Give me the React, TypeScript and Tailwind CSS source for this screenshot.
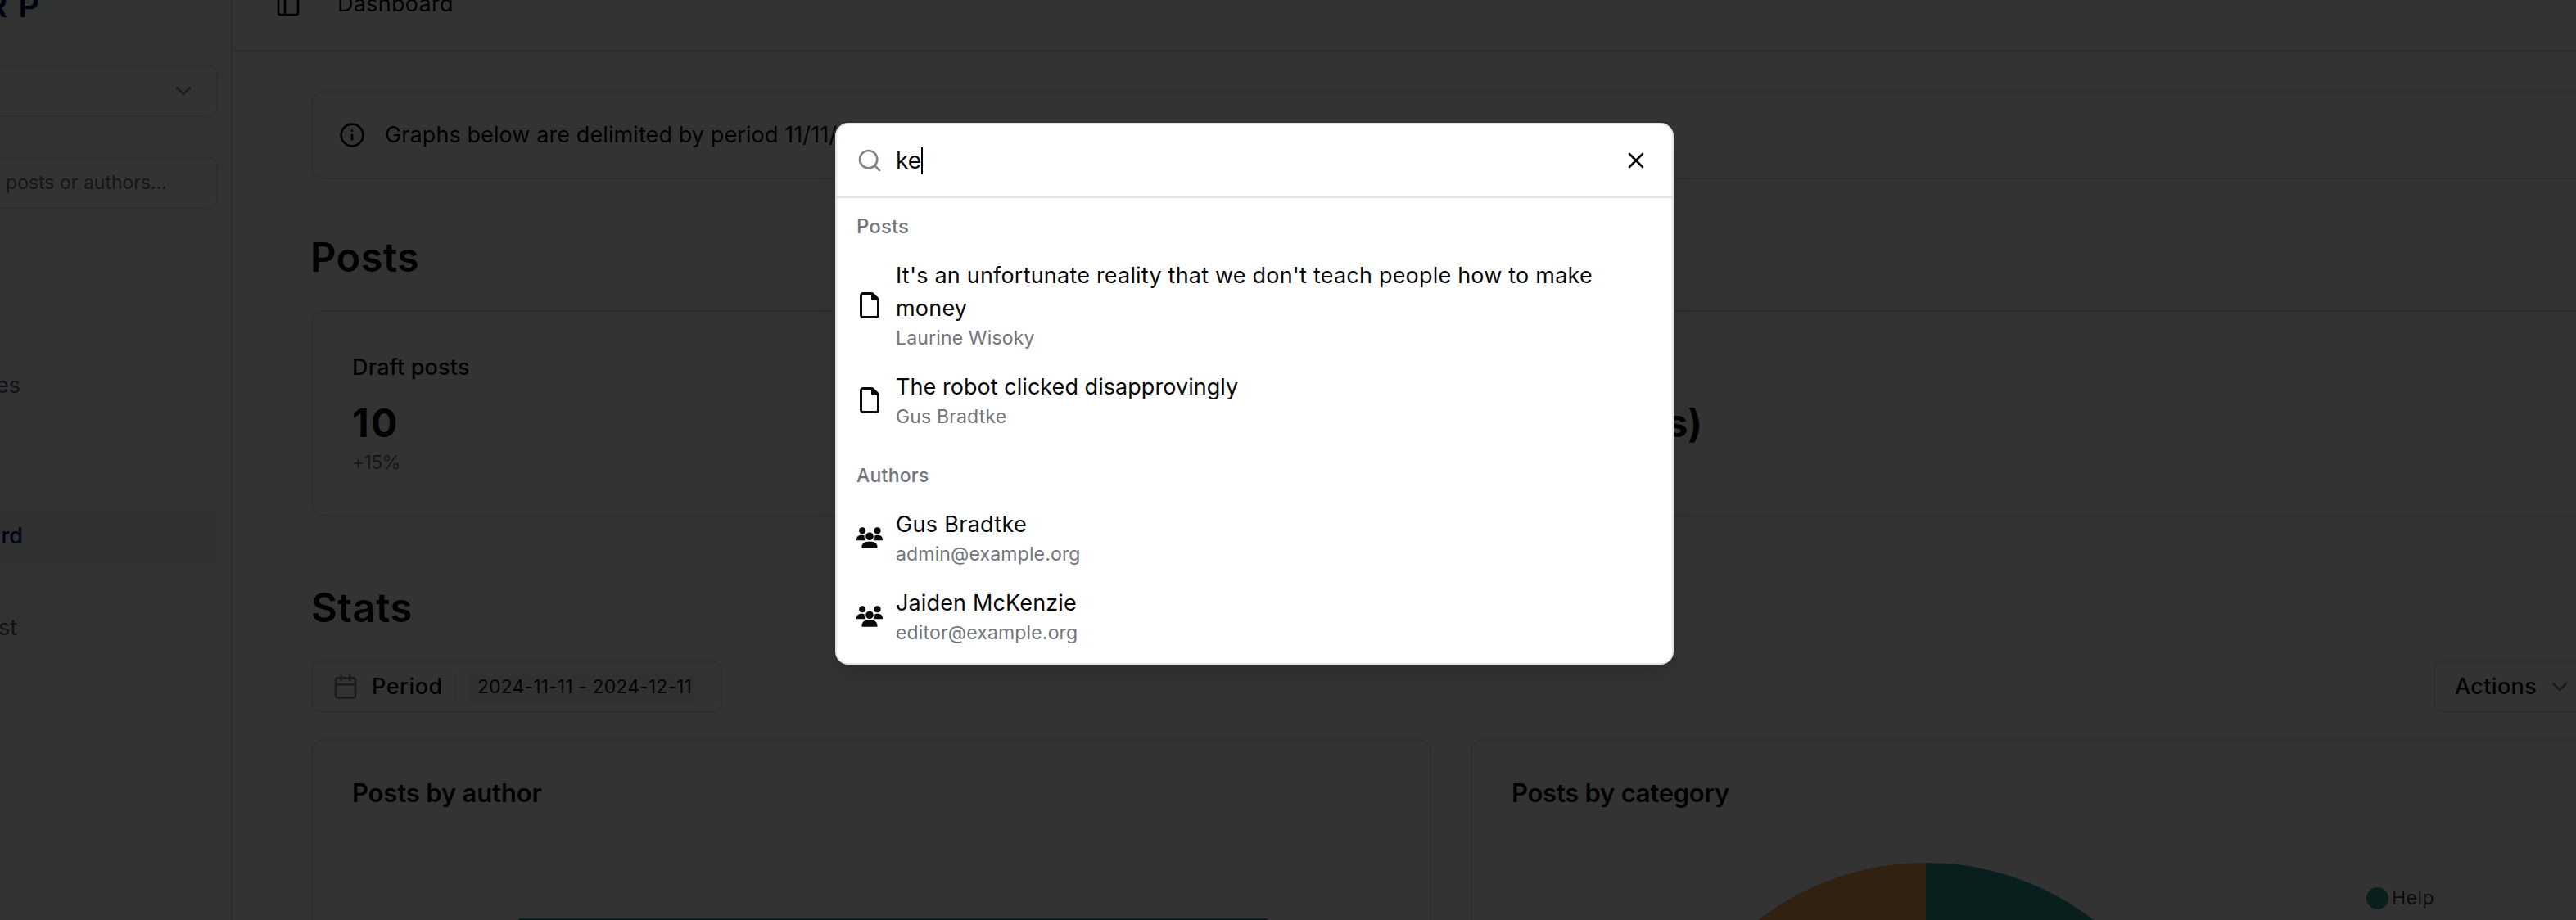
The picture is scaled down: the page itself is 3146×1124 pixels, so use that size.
import type { ReactNode } from "react";
import { Calendar, ChevronDown, Info, PanelLeft, Search, X } from "lucide-react";
import { FaRegFile, FaUsers } from "react-icons/fa6";

function Sidebar() {
  return (
    <aside className="flex w-[284px] shrink-0 flex-col overflow-hidden border-r-2 border-[#e0e4e6] bg-[#f3fbf7] pr-4">
      <div className="-mt-[13px] -ml-[17px] flex h-[92px] items-start text-[40px] leading-10 font-semibold tracking-[0.33em] text-[#00004b]">
        RP
      </div>
      <div className="-ml-4 flex h-16 items-center justify-end rounded-xl border-2 border-[#e0e4e8] bg-white pr-6">
        <ChevronDown className="size-8 text-[#8d9aa8]" />
      </div>
      <div className="mt-12 -ml-4 flex h-16 items-center justify-end rounded-xl border-2 border-[#e0e4e8] bg-white pr-[60px] text-[23px] whitespace-nowrap text-[#6f7076]">
        r posts or authors...
      </div>
      <nav className="mt-[184px] -ml-4 flex flex-col text-[27px] leading-10 text-[#555577]">
        <div className="flex h-16 w-[41px] items-center justify-end">es</div>
        <div className="mt-[120px] flex h-16 items-center rounded-xl bg-[#ebeef5] font-medium text-[#000066]">
          <span className="flex w-[44px] justify-end">ard</span>
        </div>
        <div className="mt-12 flex h-16 w-[37px] items-center justify-end">st</div>
      </nav>
    </aside>
  );
}

function Card({ className, children }: { className: string; children: ReactNode }) {
  return (
    <section className={`flex flex-1 flex-col rounded-2xl border-2 border-[#e6e7e9] bg-white p-12 shadow-[0_2px_4px_rgba(0,0,0,0.07)] ${className}`}>
      {children}
    </section>
  );
}

function Dashboard() {
  return (
    <main className="flex w-[2862px] flex-col overflow-hidden bg-white">
      <header className="-mt-[50px] flex h-[113px] shrink-0 items-center gap-11 border-b-2 border-[#e0e4e8] pl-[52px] text-[27px] tracking-[0.0105em]">
        <PanelLeft className="size-8" />
        <span>Dashboard</span>
      </header>
      <div className="flex w-[2976px] flex-col pt-12 pr-24 pl-24">
        <div className="flex h-[108px] items-center gap-6 rounded-2xl border-2 border-[#e6e7e9] pl-8 text-[27px] tracking-[0.0035em]">
          <Info className="size-8" />
          <span>Graphs below are delimited by period 11/11/2024 - 12/11/2024</span>
        </div>
        <h2 className="mt-16 -ml-px text-[49px] leading-16 font-semibold tracking-[0.006em]">Posts</h2>
        <div className="mt-8 flex gap-12">
          <Card className="h-[252px]">
            <h3 className="text-[27px] leading-10 font-medium tracking-[0.006em]">Draft posts</h3>
            <p className="mt-4 text-[48px] leading-16 font-bold tracking-[0.05em]">10</p>
            <p className="text-[23px] leading-8 tracking-[-0.027em] text-[#71717a]">+15%</p>
          </Card>
          <Card className="h-[252px]">
            <h3 className="text-[27px] leading-10 font-medium tracking-[0.006em]">Published</h3>
            <p className="mt-4 w-[233px] text-right text-[47px] leading-16 font-bold whitespace-nowrap">12 post(s)</p>
          </Card>
        </div>
        <h2 className="mt-20 text-[49px] leading-16 font-semibold tracking-[0.01em]">Stats</h2>
        <div className="mt-8 flex justify-between">
          <div className="flex h-16 w-[502px] items-center rounded-xl border-2 border-[#e4e5e8] pl-6">
            <Calendar className="size-8 shrink-0 text-[#8a8a8a]" />
            <span className="ml-4 w-[85px] shrink-0 text-[27px] font-medium tracking-[0.02em]">Period</span>
            <span className="ml-4 h-8 w-0.5 shrink-0 bg-[#e4e5e8]" />
            <span className="ml-4 flex h-11 w-[282px] shrink-0 items-center justify-center rounded-lg bg-[#f3f4f6] text-[23px] whitespace-nowrap tracking-[0.005em] text-[#0f172a]">
              2024-11-11 - 2024-12-11
            </span>
          </div>
          <div className="flex h-16 w-48 items-center rounded-xl border-2 border-[#e4e5e8] pl-6">
            <span className="w-[112px] shrink-0 text-[27px] font-medium tracking-[0.013em]">Actions</span>
            <ChevronDown className="size-8 shrink-0 text-[#8a8a8a]" />
          </div>
        </div>
        <div className="mt-8 flex gap-12">
          <Card className="h-[640px]">
            <h3 className="text-[31px] leading-8 font-semibold tracking-[-0.005em]">Posts by author</h3>
            <div className="mt-[137px] ml-[204px] h-40 w-[914px] bg-[#2a9d90]" />
          </Card>
          <Card className="h-[640px]">
            <h3 className="text-[31px] leading-8 font-semibold tracking-[-0.0085em]">Posts by category</h3>
            <div className="flex text-[23px] leading-8">
              <svg className="h-[500px] w-[1044px] shrink-0" viewBox="0 0 1044 500">
                <path d="M506 69A335 335 0 0 0 171 404H506Z" fill="#f4a462" />
                <path d="M506 69A335 335 0 0 1 841 404H506Z" fill="#2a9d90" />
              </svg>
              <div className="mt-24 flex h-8 items-center gap-1">
                <span className="size-[27px] rounded-full bg-[#2a9d90]" />
                <span className="tracking-[0.02em] text-[#3f3f46]">Help</span>
              </div>
            </div>
          </Card>
        </div>
      </div>
    </main>
  );
}

function Result({ icon, sub, children }: { icon: ReactNode; sub: string; children: ReactNode }) {
  return (
    <li className="flex items-center gap-4 px-6 py-3">
      <span className="flex size-8 shrink-0 items-center justify-center text-[32px]">{icon}</span>
      <div className="flex flex-col">
        <span className="text-[27px] leading-10">{children}</span>
        <span className="text-[23px] leading-8 tracking-[0.007em] text-[#72757c]">{sub}</span>
      </div>
    </li>
  );
}

function SearchDialog() {
  return (
    <div className="absolute top-[150px] left-[1020px] flex h-[662px] w-[1024px] flex-col rounded-2xl border-2 border-[#e0e4e8] bg-white text-[#09090b] shadow-[0_20px_30px_-6px_rgba(0,0,0,0.1),0_8px_12px_-8px_rgba(0,0,0,0.1)]">
      <div className="flex h-[90px] shrink-0 items-center border-b-2 border-[#e0e4e8] px-6">
        <Search className="size-8 text-[#858585]" />
        <span className="ml-4 text-[28px] leading-10">ke</span>
        <span className="h-[33px] w-0.5 bg-black" />
        <X className="mr-1 ml-auto size-8" />
      </div>
      <h4 className="mt-[19px] px-6 pb-3 text-[24px] leading-8 font-medium tracking-[0.005em] text-[#72757c]">Posts</h4>
      <ul>
        <Result icon={<FaRegFile />} sub="Laurine Wisoky">
          <span className="tracking-[0.0075em]">
            It's an unfortunate reality that we don't teach people how to make money
          </span>
        </Result>
        <Result icon={<FaRegFile />} sub="Gus Bradtke">
          <span className="tracking-[0.0017em]">The robot clicked disapprovingly</span>
        </Result>
      </ul>
      <h4 className="mt-7 px-6 pb-3 text-[23px] leading-8 font-medium tracking-[0.01em] text-[#72757c]">Authors</h4>
      <ul>
        <Result icon={<FaUsers />} sub="admin@example.org">
          <span className="tracking-[0.0114em]">Gus Bradtke</span>
        </Result>
        <Result icon={<FaUsers />} sub="editor@example.org">
          <span className="tracking-[0.0054em]">Jaiden McKenzie</span>
        </Result>
      </ul>
    </div>
  );
}

export default function App() {
  return (
    <div className="relative flex h-[1124px] w-[3146px] overflow-hidden bg-white font-['Inter',sans-serif] text-[#09090b]">
      <Sidebar />
      <Dashboard />
      <div className="absolute inset-0 bg-black/80" />
      <SearchDialog />
    </div>
  );
}
